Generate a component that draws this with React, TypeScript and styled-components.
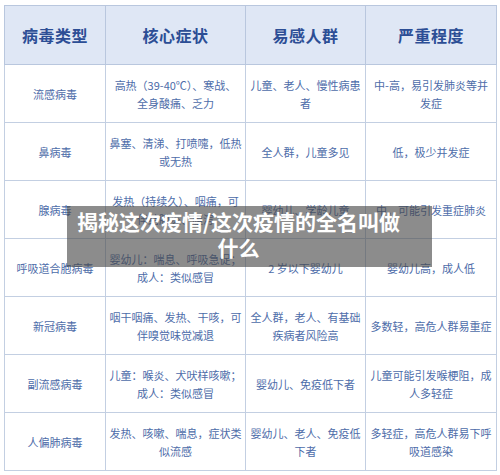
import styled, { createGlobalStyle } from "styled-components";

const GlobalStyle = createGlobalStyle`
  html, body {
    margin: 0;
    padding: 0;
    background: #ffffff;
  }
  body {
    font-family: "Noto Sans CJK SC", "Noto Sans", sans-serif;
  }
`;

// each cell is a list of lines, wrapped as in the original chart
type Lines = string[];

interface Row {
  name: string;
  symptoms: Lines;
  people: Lines;
  severity: Lines;
}

const headers = ["病毒类型", "核心症状", "易感人群", "严重程度"];

const rows: Row[] = [
  {
    name: "流感病毒",
    symptoms: ["高热（39-40℃）、寒战、", "全身酸痛、乏力"],
    people: ["儿童、老人、慢性病患", "者"],
    severity: ["中-高，易引发肺炎等并", "发症"],
  },
  {
    name: "鼻病毒",
    symptoms: ["鼻塞、清涕、打喷嚏，低热", "或无热"],
    people: ["全人群，儿童多见"],
    severity: ["低，极少并发症"],
  },
  {
    name: "腺病毒",
    symptoms: ["发热（持续久）、咽痛，可", "伴结膜炎、腹泻"],
    people: ["婴幼儿、学龄儿童"],
    severity: ["中，可能引发重症肺炎"],
  },
  {
    name: "呼吸道合胞病毒",
    symptoms: ["婴幼儿：喘息、呼吸急促；", "成人：类似感冒"],
    people: ["2 岁以下婴幼儿"],
    severity: ["婴幼儿高，成人低"],
  },
  {
    name: "新冠病毒",
    symptoms: ["咽干咽痛、发热、干咳，可", "伴嗅觉味觉减退"],
    people: ["全人群，老人、有基础", "疾病者风险高"],
    severity: ["多数轻，高危人群易重症"],
  },
  {
    name: "副流感病毒",
    symptoms: ["儿童：喉炎、犬吠样咳嗽；", "成人：类似感冒"],
    people: ["婴幼儿、免疫低下者"],
    severity: ["儿童可能引发喉梗阻，成", "人多轻症"],
  },
  {
    name: "人偏肺病毒",
    symptoms: ["发热、咳嗽、喘息，症状类", "似流感"],
    people: ["婴幼儿、老人、免疫低", "下者"],
    severity: ["多轻症，高危人群易下呼", "吸道感染"],
  },
];

const Page = styled.div`
  position: relative;
  width: 500px;
  height: 475px;
  padding: 5px 4px 0 4px;
  box-sizing: border-box;
  overflow: hidden;
  background: #ffffff;
`;

const Table = styled.table`
  width: 492px;
  border-collapse: collapse;
  table-layout: fixed;
`;

const Col = styled.col<{ $w: number }>`
  width: ${(p) => p.$w}px;
`;

const HeadCell = styled.th`
  height: 56px;
  background: #dfe7f5;
  border: 1px solid #b9c7de;
  color: #2c4e95;
  font-size: 16px;
  font-weight: 700;
  letter-spacing: 0.5px;
  text-align: center;
  vertical-align: middle;
`;

const Cell = styled.td`
  height: 57px;
  border: 1px solid #c3cfe2;
  color: #4d6ca9;
  font-size: 11px;
  line-height: 18px;
  padding: 0 2px;
  text-align: center;
  vertical-align: middle;
  white-space: nowrap;
  overflow: hidden;
`;

const Line = styled.span`
  display: block;
`;

const Banner = styled.div`
  position: absolute;
  left: 67px;
  top: 206px;
  width: 365px;
  height: 61px;
  box-sizing: border-box;
  padding: 2px 30px 0 8px;
  background: rgba(70, 70, 70, 0.62);
  color: #ffffff;
  font-size: 21px;
  font-weight: 700;
  line-height: 26px;
  text-align: center;
`;

const CellLines = ({ lines }: { lines: Lines }) => (
  <Cell>
    {lines.map((l) => (
      <Line key={l}>{l}</Line>
    ))}
  </Cell>
);

export default function App() {
  return (
    <>
      <GlobalStyle />
      <Page>
        <Table>
          <colgroup>
            <Col $w={101} />
            <Col $w={140} />
            <Col $w={120} />
            <Col $w={131} />
          </colgroup>
          <thead>
            <tr>
              {headers.map((h) => (
                <HeadCell key={h}>{h}</HeadCell>
              ))}
            </tr>
          </thead>
          <tbody>
            {rows.map((r) => (
              <tr key={r.name}>
                <Cell>{r.name}</Cell>
                <CellLines lines={r.symptoms} />
                <CellLines lines={r.people} />
                <CellLines lines={r.severity} />
              </tr>
            ))}
          </tbody>
        </Table>
        <Banner>揭秘这次疫情/这次疫情的全名叫做什么</Banner>
      </Page>
    </>
  );
}
